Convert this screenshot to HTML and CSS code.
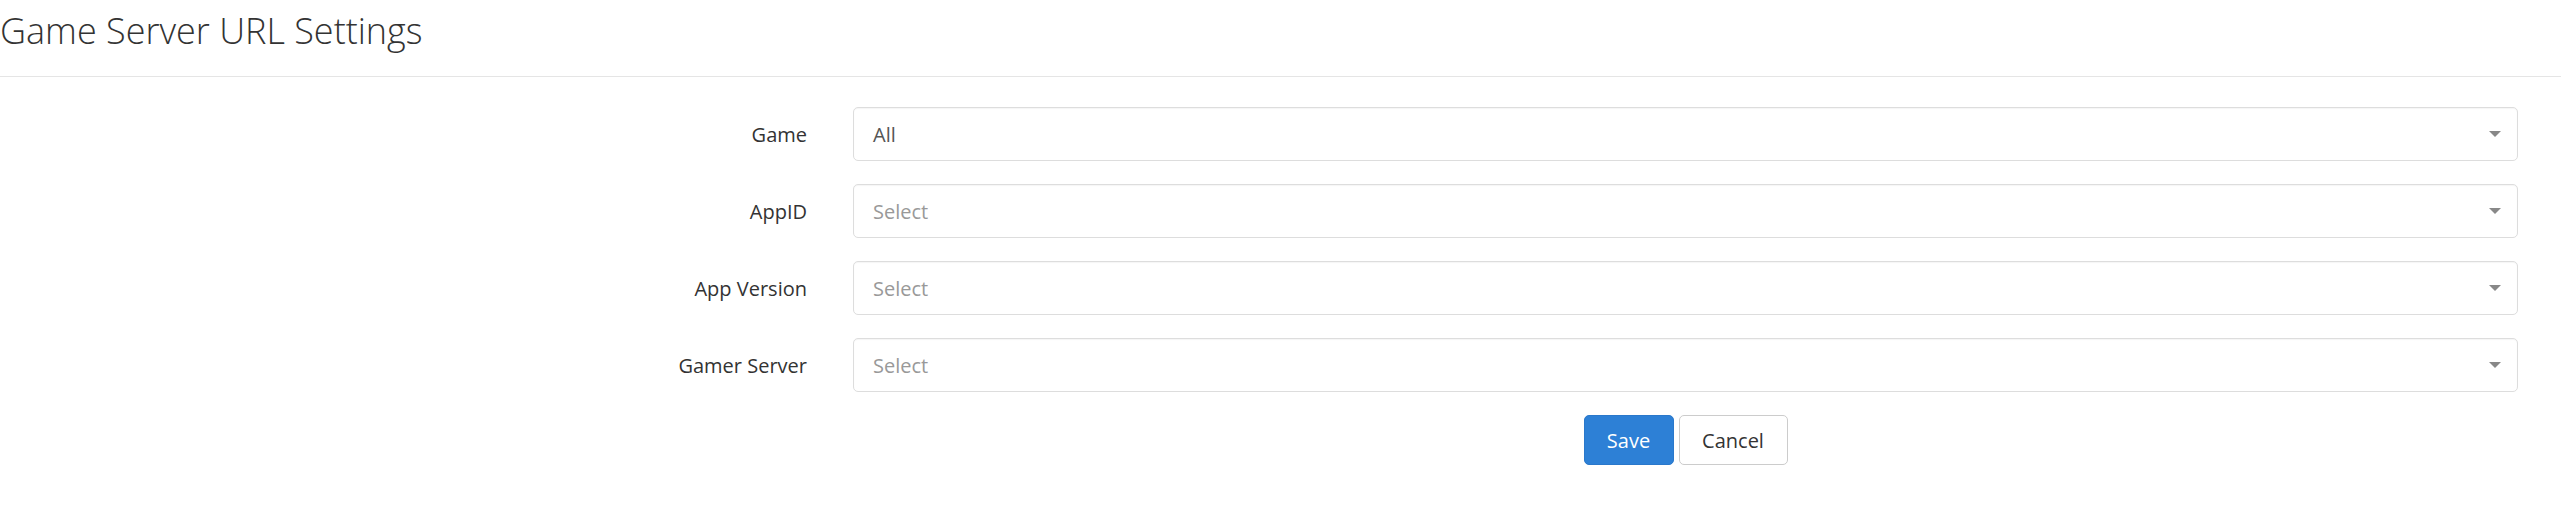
FILE: index.html
```html
<html>
  <head>
    <title>Game Server URL Settings</title>
    <link rel="stylesheet" href="styles.css">
  </head>
  <body>
    <div class="page-header">
      <h1>Game Server URL Settings</h1>
    </div>

    <form class="form-horizontal">
      <!-- Game -->
      <div class="form-row">
        <label class="form-label">Game</label>
        <div class="select-box">
          <span class="select-value">All</span>
          <span class="caret"></span>
        </div>
      </div>
      <!-- AppID -->
      <div class="form-row">
        <label class="form-label">AppID</label>
        <div class="select-box">
          <span class="select-value placeholder">Select</span>
          <span class="caret"></span>
        </div>
      </div>
      <!-- App Version -->
      <div class="form-row">
        <label class="form-label">App Version</label>
        <div class="select-box">
          <span class="select-value placeholder">Select</span>
          <span class="caret"></span>
        </div>
      </div>
      <!-- Gamer Server -->
      <div class="form-row">
        <label class="form-label">Gamer Server</label>
        <div class="select-box">
          <span class="select-value placeholder">Select</span>
          <span class="caret"></span>
        </div>
      </div>

      <div class="form-row">
        <div class="form-label"></div>
        <div class="actions">
          <button type="button" class="btn btn-primary">Save</button>
          <button type="button" class="btn btn-default">Cancel</button>
        </div>
      </div>
    </form>
  </body>
</html>
```

FILE: styles.css
```css
body {
  margin: 0;
  background: #fff;
  font-family: 'Open Sans', 'Noto Sans', sans-serif;
  color: #333;
}

.page-header {
  height: 76px;
  border-bottom: 1px solid #e5e5e5;
  box-sizing: content-box;
}

.page-header h1 {
  margin: 0;
  padding-top: 5px;
  font-size: 36px;
  font-weight: 300;
  line-height: 52px;
  color: #333;
}

.form-horizontal {
  padding-top: 30px;
  padding-right: 43px;
}

.form-row {
  display: grid;
  grid-template-columns: 807px 1fr;
  column-gap: 46px;
  align-items: center;
  margin-bottom: 23px;
}

.form-label {
  text-align: right;
  font-size: 20px;
  color: #333;
}

.select-box {
  display: flex;
  align-items: center;
  justify-content: space-between;
  height: 54px;
  box-sizing: border-box;
  padding: 0 16px 0 19px;
  border: 1px solid #ddd;
  border-radius: 5px;
  background: #fff;
  box-shadow: inset 0 1px 1px rgba(0, 0, 0, 0.04);
}

.select-value {
  font-size: 20px;
  color: #555;
}

.select-value.placeholder {
  color: #999;
}

.caret {
  width: 0;
  height: 0;
  border-left: 6px solid transparent;
  border-right: 6px solid transparent;
  border-top: 6px solid #888;
}

.actions {
  display: flex;
  justify-content: center;
  gap: 5px;
}

.btn {
  height: 50px;
  padding: 0 20px;
  font-family: 'Open Sans', 'Noto Sans', sans-serif;
  font-size: 20px;
  border-radius: 5px;
  cursor: pointer;
}

.btn-primary {
  width: 90px;
  background: #2d80d6;
  border: 1px solid #2a78cb;
  color: #fff;
}

.btn-default {
  width: 109px;
  background: #fff;
  border: 1px solid #ccc;
  color: #333;
}
```
